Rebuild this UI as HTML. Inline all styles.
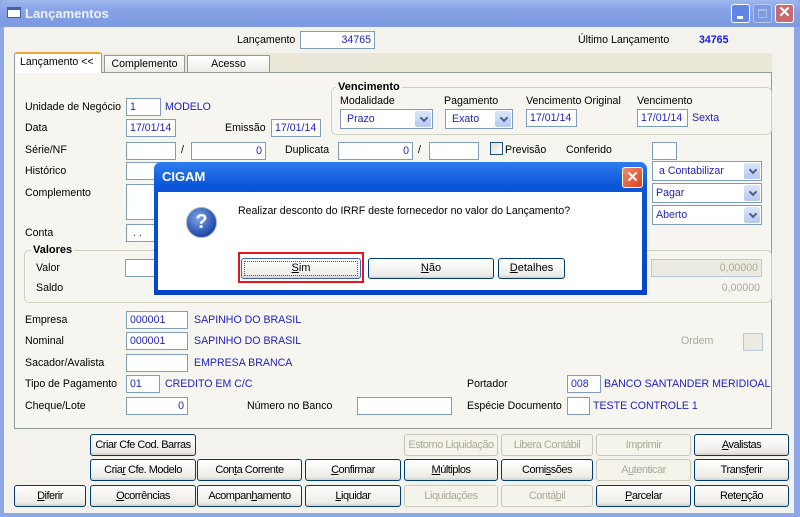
<!DOCTYPE html>
<html><head><meta charset="utf-8"><style>
*{margin:0;padding:0;box-sizing:border-box}
body{width:800px;height:517px;overflow:hidden;font-family:"Liberation Sans",sans-serif;font-size:10.6px;color:#000;background:#8da7e6;position:relative}
.a{position:absolute;white-space:nowrap}
.l{position:absolute;white-space:nowrap;line-height:12px}
.b{color:#2222bb}
.in{position:absolute;background:#fff;border:1px solid #7f9db9;height:18px;line-height:16px;padding:0 3px;color:#2222bb;font-size:10.6px;white-space:nowrap;overflow:hidden}
.r{text-align:right}
.sel{position:absolute;background:#fff;border:1px solid #7f9db9;height:20px;line-height:18px;padding-left:6px;color:#2222bb}
.sel:after{content:"";position:absolute;right:1px;top:1px;width:16px;height:16px;background:linear-gradient(#dbe6fb,#b5c8f3);border-radius:2px}
.sel i{position:absolute;right:5px;top:5px;width:6px;height:6px;border-right:2px solid #4d6185;border-bottom:2px solid #4d6185;transform:rotate(45deg);z-index:2}
.btn{position:absolute;height:22px;border:1px solid #003c74;border-radius:3px;background:linear-gradient(#fff,#ecebe6 85%,#d6d0c5);text-align:center;line-height:20px;font-size:11px;letter-spacing:-0.5px;white-space:nowrap;overflow:hidden}
.dis{border-color:#c9c7ba;color:#aca899;background:#f5f4ea}
u{text-decoration:underline}
.grp{position:absolute;border:1px solid #d0d0bf;border-radius:5px}
.gt{position:absolute;background:#f6f5f0;font-weight:bold;padding:0 2px;line-height:12px;font-size:11px}
</style></head><body>
<div class="a" style="left:0;top:0;width:800px;height:27px;background:linear-gradient(#9fb7ef,#86a2e6 40%,#7d99df);border-radius:6px 6px 0 0"></div>
<div class="a" style="left:7px;top:7px;width:14px;height:11px;background:#fff;border:1px solid #3f5fb0;border-top:3px solid #3f5fb0"></div>
<div class="a" style="left:25px;top:6px;color:#eef2ff;font-weight:bold;font-size:13px">Lançamentos</div>
<div class="a" style="left:731px;top:4px;width:19px;height:19px;border:1px solid #fff;border-radius:3px;background:#5f86e0"><div class="a" style="left:5px;top:11px;width:6px;height:3px;background:#fff"></div></div>
<div class="a" style="left:753px;top:4px;width:19px;height:19px;border:1px solid #b8c8f0;border-radius:3px;background:#7d9ae0"><div class="a" style="left:4px;top:4px;width:9px;height:9px;border:1px solid #a8bde9;border-top:2px solid #a8bde9"></div></div>
<div class="a" style="left:775px;top:4px;width:19px;height:19px;border:1px solid #fff;border-radius:3px;background:#c86a70;color:#fff;font-weight:bold;font-size:15px;line-height:16px;text-align:center">✕</div>
<div class="a" style="left:4px;top:27px;width:790px;height:486px;background:#f3f2ec"></div>
<div class="l" style="left:237px;top:34px">Lançamento</div>
<div class="in r" style="left:300px;top:31px;width:75px">34765</div>
<div class="l" style="left:578px;top:34px">Último Lançamento</div>
<div class="l" style="left:699px;top:34px;color:#1a1ae0;font-weight:bold">34765</div>
<div class="a" style="left:14px;top:53px;width:758px;height:20px;background:#ebe8d9"></div>
<div class="a" style="left:14px;top:72px;width:758px;height:357px;background:#f6f5f0;border:1px solid #919b9c"></div>
<div class="a" style="left:104px;top:55px;width:81px;height:18px;border:1px solid #919b9c;background:linear-gradient(#fff,#ecebe5);text-align:center;line-height:16px">Complemento</div>
<div class="a" style="left:187px;top:55px;width:83px;height:18px;border:1px solid #919b9c;background:linear-gradient(#fff,#ecebe5);text-align:center;line-height:16px">Acesso</div>
<div class="a" style="left:14px;top:52px;width:88px;height:21px;border:1px solid #919b9c;border-top:2px solid #f2a33a;border-bottom:none;background:#fff;padding-left:5px;line-height:17px;border-radius:3px 3px 0 0">Lançamento &lt;&lt;</div>
<div class="grp" style="left:331px;top:87px;width:441px;height:48px"></div>
<div class="gt" style="left:336px;top:81px">Vencimento</div>
<div class="l" style="left:340px;top:95px">Modalidade</div>
<div class="sel" style="left:340px;top:109px;width:93px">Prazo<i></i></div>
<div class="l" style="left:444px;top:95px">Pagamento</div>
<div class="sel" style="left:445px;top:109px;width:68px">Exato<i></i></div>
<div class="l" style="left:526px;top:95px">Vencimento Original</div>
<div class="in" style="left:526px;top:109px;width:51px">17/01/14</div>
<div class="l" style="left:637px;top:95px">Vencimento</div>
<div class="in" style="left:637px;top:109px;width:51px">17/01/14</div>
<div class="l b" style="left:692px;top:112px">Sexta</div>
<div class="l" style="left:25px;top:101px">Unidade de Negócio</div>
<div class="in" style="left:126px;top:98px;width:35px">1</div>
<div class="l b" style="left:165px;top:101px">MODELO</div>
<div class="l" style="left:25px;top:122px">Data</div>
<div class="in" style="left:126px;top:119px;width:50px">17/01/14</div>
<div class="l" style="left:225px;top:122px">Emissão</div>
<div class="in" style="left:271px;top:119px;width:50px">17/01/14</div>
<div class="l" style="left:25px;top:144px">Série/NF</div>
<div class="in" style="left:126px;top:142px;width:50px"></div>
<div class="l" style="left:181px;top:144px">/</div>
<div class="in r" style="left:191px;top:142px;width:75px">0</div>
<div class="l" style="left:285px;top:144px">Duplicata</div>
<div class="in r" style="left:338px;top:142px;width:75px">0</div>
<div class="l" style="left:418px;top:144px">/</div>
<div class="in" style="left:429px;top:142px;width:50px"></div>
<div class="a" style="left:490px;top:142px;width:13px;height:13px;border:1px solid #1c5180;background:linear-gradient(135deg,#dcdbd5,#fff)"></div>
<div class="l" style="left:505px;top:144px">Previsão</div>
<div class="l" style="left:566px;top:144px">Conferido</div>
<div class="in" style="left:652px;top:142px;width:25px"></div>
<div class="l" style="left:25px;top:165px">Histórico</div>
<div class="in" style="left:126px;top:162px;width:300px"></div>
<div class="sel" style="left:652px;top:161px;width:110px">a Contabilizar<i></i></div>
<div class="sel" style="left:652px;top:183px;width:110px;padding-left:3px">Pagar<i></i></div>
<div class="sel" style="left:652px;top:205px;width:110px;padding-left:3px">Aberto<i></i></div>
<div class="l" style="left:25px;top:187px">Complemento</div>
<div class="in" style="left:126px;top:184px;width:300px;height:36px"></div>
<div class="l" style="left:25px;top:227px">Conta</div>
<div class="in" style="left:126px;top:224px;width:300px">&nbsp;. .</div>
<div class="grp" style="left:24px;top:250px;width:748px;height:53px"></div>
<div class="gt" style="left:31px;top:244px">Valores</div>
<div class="l" style="left:36px;top:262px">Valor</div>
<div class="in" style="left:125px;top:259px;width:100px"></div>
<div class="l" style="left:36px;top:282px">Saldo</div>
<div class="in r" style="left:651px;top:259px;width:111px;background:#ecebe2;color:#aca899;border-color:#b9c8dc">0,00000</div>
<div class="l" style="left:700px;top:282px;width:60px;text-align:right;color:#aca899">0,00000</div>
<div class="l" style="left:25px;top:314px">Empresa</div>
<div class="in" style="left:126px;top:311px;width:62px">000001</div>
<div class="l b" style="left:194px;top:314px">SAPINHO DO BRASIL</div>
<div class="l" style="left:25px;top:335px">Nominal</div>
<div class="in" style="left:126px;top:332px;width:62px">000001</div>
<div class="l b" style="left:194px;top:335px">SAPINHO DO BRASIL</div>
<div class="l" style="left:681px;top:335px;color:#aca899">Ordem</div>
<div class="in" style="left:743px;top:333px;width:20px;background:#ecebe2;border-color:#b9c8dc"></div>
<div class="l" style="left:25px;top:357px">Sacador/Avalista</div>
<div class="in" style="left:126px;top:354px;width:62px"></div>
<div class="l b" style="left:194px;top:357px">EMPRESA BRANCA</div>
<div class="l" style="left:25px;top:378px">Tipo de Pagamento</div>
<div class="in" style="left:126px;top:375px;width:34px">01</div>
<div class="l b" style="left:165px;top:378px">CREDITO EM C/C</div>
<div class="l" style="left:467px;top:378px">Portador</div>
<div class="in" style="left:567px;top:375px;width:34px">008</div>
<div class="l b" style="left:604px;top:378px">BANCO SANTANDER MERIDIOAL</div>
<div class="l" style="left:25px;top:400px">Cheque/Lote</div>
<div class="in r" style="left:126px;top:397px;width:62px">0</div>
<div class="l" style="left:247px;top:400px">Número no Banco</div>
<div class="in" style="left:357px;top:397px;width:95px"></div>
<div class="l" style="left:467px;top:400px">Espécie Documento</div>
<div class="in" style="left:567px;top:397px;width:23px"></div>
<div class="l b" style="left:593px;top:400px">TESTE CONTROLE 1</div>
<div class="btn" style="left:90px;top:434px;width:106px">Criar Cfe Cod. Barras</div>
<div class="btn dis" style="left:404px;top:434px;width:94px">Estorno Liquidação</div>
<div class="btn dis" style="left:501px;top:434px;width:92px">Libera Contábil</div>
<div class="btn dis" style="left:596px;top:434px;width:95px">Imprimir</div>
<div class="btn" style="left:694px;top:434px;width:95px"><u>A</u>valistas</div>
<div class="btn" style="left:90px;top:459px;width:106px">Cria<u>r</u> Cfe. Modelo</div>
<div class="btn" style="left:197px;top:459px;width:105px">Con<u>t</u>a Corrente</div>
<div class="btn" style="left:305px;top:459px;width:96px"><u>C</u>onfirmar</div>
<div class="btn" style="left:404px;top:459px;width:94px"><u>M</u>últiplos</div>
<div class="btn" style="left:501px;top:459px;width:92px">Comi<u>s</u>sões</div>
<div class="btn dis" style="left:596px;top:459px;width:95px">A<u>u</u>tenticar</div>
<div class="btn" style="left:694px;top:459px;width:95px">Trans<u>f</u>erir</div>
<div class="btn" style="left:14px;top:485px;width:72px"><u>D</u>iferir</div>
<div class="btn" style="left:90px;top:485px;width:106px"><u>O</u>corrências</div>
<div class="btn" style="left:197px;top:485px;width:105px">Acompan<u>h</u>amento</div>
<div class="btn" style="left:305px;top:485px;width:96px"><u>L</u>iquidar</div>
<div class="btn dis" style="left:404px;top:485px;width:94px">Liquidações</div>
<div class="btn dis" style="left:501px;top:485px;width:92px">Contá<u>b</u>il</div>
<div class="btn" style="left:596px;top:485px;width:95px"><u>P</u>arcelar</div>
<div class="btn" style="left:694px;top:485px;width:95px">Rete<u>n</u>ção</div>
<div class="a" style="left:154px;top:162px;width:493px;height:133px;background:linear-gradient(#2f7df0,#0a55d8 18%,#0444c8);border-radius:7px 7px 0 0"></div>
<div class="a" style="left:162px;top:169px;color:#fff;font-weight:bold;font-size:13px">CIGAM</div>
<div class="a" style="left:622px;top:167px;width:21px;height:21px;border:1px solid #fff;border-radius:3px;background:linear-gradient(135deg,#f08a6a,#d9431f);color:#fff;font-weight:bold;font-size:15px;line-height:19px;text-align:center">✕</div>
<div class="a" style="left:158px;top:192px;width:484px;height:98px;background:#fff"></div>
<div class="a" style="left:186px;top:207px;width:31px;height:31px;border-radius:50%;background:radial-gradient(circle at 40% 35%,#7fa6ea,#1f4aa8 70%,#123580);border:1px solid #a9b4c8;color:#fff;font-weight:bold;font-size:20px;line-height:29px;text-align:center">?</div>
<div class="a" style="left:238px;top:205px">Realizar desconto do IRRF deste fornecedor no valor do Lançamento?</div>
<div class="a" style="left:238px;top:252px;width:126px;height:31px;border:2px solid #e8141c"></div>
<div class="btn" style="left:241px;top:258px;width:120px;height:21px;line-height:19px;letter-spacing:0;border-color:#3d62b7;outline:1px dotted #555;outline-offset:-4px"><u>S</u>im</div>
<div class="btn" style="left:368px;top:258px;width:126px;height:21px;line-height:19px;letter-spacing:0"><u>N</u>ão</div>
<div class="btn" style="left:498px;top:258px;width:67px;height:21px;line-height:19px;letter-spacing:0"><u>D</u>etalhes</div>
</body></html>
